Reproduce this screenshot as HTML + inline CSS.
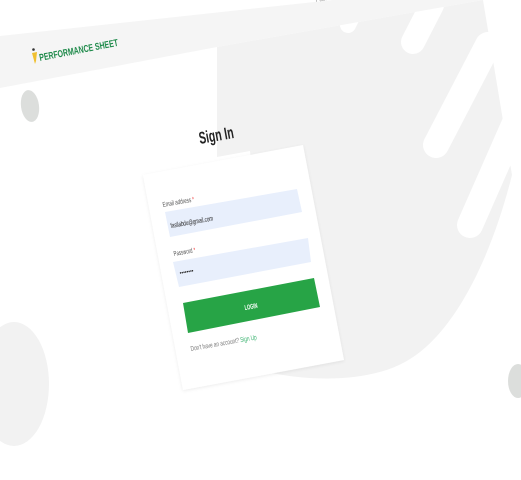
<!DOCTYPE html>
<html><head><meta charset="utf-8"><style>
html,body{margin:0;padding:0;background:#fff;width:521px;height:480px;overflow:hidden}
svg{display:block}
text{font-family:"Liberation Sans",sans-serif}
</style></head><body>
<svg width="521" height="480" viewBox="0 0 521 480">
<defs><filter id="sh" x="-10%" y="-10%" width="120%" height="120%"><feDropShadow dx="0" dy="1" stdDeviation="1.5" flood-color="#000" flood-opacity="0.08"/></filter></defs>
<path d="M217,47 L483,0 L512,175 C492,255 455,335 405,362 C365,384 305,380 272,373 L250,151 L217,157 Z" fill="#f2f2f2"/>
<g stroke="#fff" stroke-linecap="round" fill="none">
<line x1="436" y1="145" x2="488" y2="45" stroke-width="26"/>
<line x1="470" y1="225" x2="514" y2="125" stroke-width="26"/>
<line x1="413" y1="42" x2="432" y2="5" stroke-width="24"/>
<line x1="348" y1="25" x2="358" y2="5" stroke-width="16"/>
</g>
<polygon points="0,36 333,0 521,0 521,-1 0,-1" fill="#fff"/>
<polygon points="0,36 333,0 483,0 217,47 0,88" fill="#f5f5f5"/>
<text x="316" y="2" font-size="6" fill="#999" transform="rotate(-10 316 2)">Fasil</text>
<ellipse cx="30" cy="106" rx="9" ry="16" fill="#dcdedc" transform="rotate(-8 30 106)"/>
<ellipse cx="14" cy="384" rx="35" ry="62" fill="#f2f2f2"/>
<ellipse cx="518" cy="381" rx="10" ry="17" fill="#dcdedc"/>
<path d="M32,53 L37,52 L36,61 L35,64 Z" fill="#f0c030"/>
<circle cx="33.5" cy="49.5" r="1.3" fill="#333"/>
<text x="40" y="61" font-size="10" font-weight="bold" fill="#1e8a4a" transform="rotate(-11 40 61)" textLength="80" lengthAdjust="spacingAndGlyphs">PERFORMANCE SHEET</text>
<text x="200" y="144" font-size="17" font-weight="bold" fill="#222" transform="rotate(-10 200 144)" textLength="35" lengthAdjust="spacingAndGlyphs">Sign In</text>
<polygon points="143,175 303,145 344,360 183,390" fill="#fff" filter="url(#sh)"/>
<polygon points="165,212 297,189 302,212 170,237" fill="#e8effc"/>
<polygon points="173,262 308,238 311,262 179,287" fill="#e8effc"/>
<polygon points="183,303 314,278 320,307 188,333" fill="#27a446"/>
<text x="163" y="207" font-size="7" fill="#555" transform="rotate(-10 163 207)" textLength="32" lengthAdjust="spacingAndGlyphs">Email address <tspan fill="#e33">*</tspan></text>
<text x="171" y="228" font-size="7" fill="#222" transform="rotate(-10 171 228)" textLength="43" lengthAdjust="spacingAndGlyphs">fasilabdu@gmail.com</text>
<text x="174" y="256" font-size="7" fill="#555" transform="rotate(-10 174 256)" textLength="22" lengthAdjust="spacingAndGlyphs">Password <tspan fill="#e33">*</tspan></text>
<text x="180" y="275" font-size="6" fill="#222" transform="rotate(-10 180 275)" textLength="14" lengthAdjust="spacingAndGlyphs">••••••••</text>
<text x="245" y="310" font-size="7" font-weight="bold" fill="#fff" transform="rotate(-10 245 310)" textLength="13" lengthAdjust="spacingAndGlyphs">LOGIN</text>
<text x="191" y="351" font-size="7" fill="#777" transform="rotate(-10 191 351)" textLength="67" lengthAdjust="spacingAndGlyphs">Don't have an account? <tspan fill="#3cb371">Sign Up</tspan></text>
</svg>
</body></html>
